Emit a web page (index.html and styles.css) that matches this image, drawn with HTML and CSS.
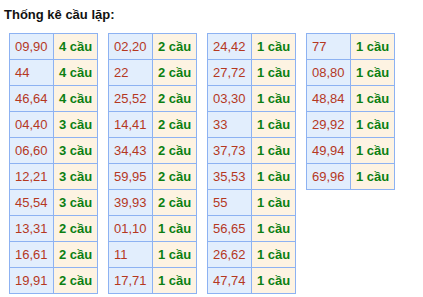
FILE: index.html
```html
<!DOCTYPE html>
<html>
<head>
<meta charset="utf-8">
<link rel="stylesheet" href="styles.css">
</head>
<body>
<div class="title">Thống kê cầu lặp:</div>
<div class="grid">
<table class="tk">
<tr><td class="n">09,90</td><td class="c">4 cầu</td></tr>
<tr><td class="n">44</td><td class="c">4 cầu</td></tr>
<tr><td class="n">46,64</td><td class="c">4 cầu</td></tr>
<tr><td class="n">04,40</td><td class="c">3 cầu</td></tr>
<tr><td class="n">06,60</td><td class="c">3 cầu</td></tr>
<tr><td class="n">12,21</td><td class="c">3 cầu</td></tr>
<tr><td class="n">45,54</td><td class="c">3 cầu</td></tr>
<tr><td class="n">13,31</td><td class="c">2 cầu</td></tr>
<tr><td class="n">16,61</td><td class="c">2 cầu</td></tr>
<tr><td class="n">19,91</td><td class="c">2 cầu</td></tr>
</table>
<table class="tk">
<tr><td class="n">02,20</td><td class="c">2 cầu</td></tr>
<tr><td class="n">22</td><td class="c">2 cầu</td></tr>
<tr><td class="n">25,52</td><td class="c">2 cầu</td></tr>
<tr><td class="n">14,41</td><td class="c">2 cầu</td></tr>
<tr><td class="n">34,43</td><td class="c">2 cầu</td></tr>
<tr><td class="n">59,95</td><td class="c">2 cầu</td></tr>
<tr><td class="n">39,93</td><td class="c">2 cầu</td></tr>
<tr><td class="n">01,10</td><td class="c">1 cầu</td></tr>
<tr><td class="n">11</td><td class="c">1 cầu</td></tr>
<tr><td class="n">17,71</td><td class="c">1 cầu</td></tr>
</table>
<table class="tk">
<tr><td class="n">24,42</td><td class="c">1 cầu</td></tr>
<tr><td class="n">27,72</td><td class="c">1 cầu</td></tr>
<tr><td class="n">03,30</td><td class="c">1 cầu</td></tr>
<tr><td class="n">33</td><td class="c">1 cầu</td></tr>
<tr><td class="n">37,73</td><td class="c">1 cầu</td></tr>
<tr><td class="n">35,53</td><td class="c">1 cầu</td></tr>
<tr><td class="n">55</td><td class="c">1 cầu</td></tr>
<tr><td class="n">56,65</td><td class="c">1 cầu</td></tr>
<tr><td class="n">26,62</td><td class="c">1 cầu</td></tr>
<tr><td class="n">47,74</td><td class="c">1 cầu</td></tr>
</table>
<table class="tk">
<tr><td class="n">77</td><td class="c">1 cầu</td></tr>
<tr><td class="n">08,80</td><td class="c">1 cầu</td></tr>
<tr><td class="n">48,84</td><td class="c">1 cầu</td></tr>
<tr><td class="n">29,92</td><td class="c">1 cầu</td></tr>
<tr><td class="n">49,94</td><td class="c">1 cầu</td></tr>
<tr><td class="n">69,96</td><td class="c">1 cầu</td></tr>
</table>
</div>
</body>
</html>
```
FILE: styles.css
```css
html, body {
  margin: 0;
  padding: 0;
  background: #ffffff;
  font-family: "Liberation Sans", Arial, sans-serif;
}
.title {
  font-size: 13px;
  font-weight: bold;
  color: #111111;
  padding: 7px 0 0 4px;
  height: 33px;
  box-sizing: border-box;
  line-height: 16px;
}
.grid {
  display: flex;
  align-items: flex-start;
  gap: 10px;
  padding-left: 9px;
}
.tk {
  border-collapse: collapse;
  border: 1px solid #8db2f2;
  table-layout: fixed;
  width: 89px;
}
.tk td {
  border: 1px solid #8db2f2;
  height: 25px;
  width: 50%;
  padding: 0 0 0 5px;
  font-size: 13px;
  white-space: nowrap;
  overflow: hidden;
  text-align: left;
  vertical-align: middle;
}
.tk td.n {
  background: #e2eefd;
  color: #b5381f;
}
.tk td.c {
  background: #fdf3e2;
  color: #0c7f12;
  font-weight: bold;
}
```
